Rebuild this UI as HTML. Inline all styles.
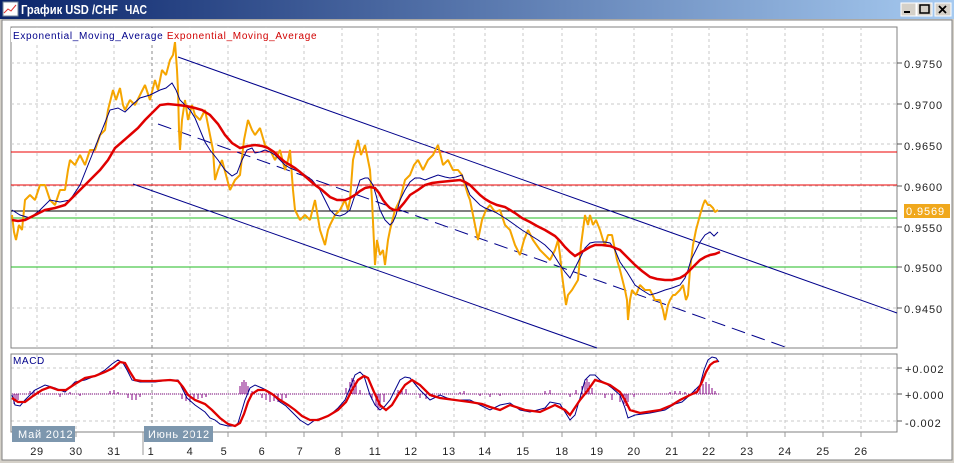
<!DOCTYPE html>
<html><head><meta charset="utf-8"><style>
body{margin:0;width:954px;height:463px;overflow:hidden;background:#d4d0c8;font-family:"Liberation Sans","DejaVu Sans",sans-serif}
</style></head><body>
<svg width="954" height="463" xmlns="http://www.w3.org/2000/svg" style="position:absolute;left:0;top:0">
<defs><linearGradient id="tb" x1="0" x2="1"><stop offset="0" stop-color="#0a246a"/><stop offset="1" stop-color="#a6caf0"/></linearGradient></defs>
<rect x="0" y="0" width="954" height="463" fill="#d4d0c8"/>
<rect x="0" y="0" width="954" height="19" fill="url(#tb)"/>
<rect x="3" y="2" width="15" height="14" fill="#fff" stroke="#789"/>
<polyline points="4,13 8,9 11,11 16,5" stroke="#d33" fill="none"/>
<text x="21" y="14" fill="#fff" font-weight="bold" font-size="13" textLength="97" lengthAdjust="spacingAndGlyphs">График USD /CHF</text>
<text x="125" y="14" fill="#fff" font-weight="bold" font-size="13" textLength="22" lengthAdjust="spacingAndGlyphs">ЧАС</text>
<g fill="#d4d0c8" stroke="#fff"><rect x="901" y="3" width="15" height="13"/><rect x="917" y="3" width="15" height="13"/><rect x="935" y="3" width="16" height="13"/></g>
<rect x="904" y="11" width="6" height="2" fill="#000"/>
<rect x="920" y="5" width="9" height="8" fill="none" stroke="#000" stroke-width="1.5"/>
<path d="M939 6l7 7M946 6l-7 7" stroke="#000" stroke-width="1.8"/>
<rect x="2" y="20" width="950" height="440" fill="#fff" stroke="#808080"/>
<rect x="11" y="27" width="886" height="321" fill="#fff" stroke="#808080"/>
<g stroke="#c8c8c8" stroke-dasharray="3,3">
<path d="M11 63H897M11 104H897M11 144H897M11 186H897M11 227H897M11 267H897M11 308H897"/>
<path d="M37 27V348M76 27V348M114 27V348M190 27V348M228 27V348M266 27V348M304 27V348M342 27V348M378 27V348M416 27V348M454 27V348M485 27V348M523 27V348M562 27V348M596 27V348M634 27V348M672 27V348M709 27V348M747 27V348M785 27V348M823 27V348M861 27V348"/>
<path d="M37 354V432M76 354V432M114 354V432M190 354V432M228 354V432M266 354V432M304 354V432M342 354V432M378 354V432M416 354V432M454 354V432M485 354V432M523 354V432M562 354V432M596 354V432M634 354V432M672 354V432M709 354V432M747 354V432M785 354V432M823 354V432M861 354V432"/>
<path d="M11 368H897M11 394H897M11 421H897"/>
</g>
<path d="M152 27V348M152 354V432" stroke="#888" stroke-dasharray="3,3"/>
<path d="M11 152H897M11 185H897" stroke="#e00" stroke-width="1"/>
<path d="M11 218H897M11 267H897" stroke="#2b2" stroke-width="1"/>
<path d="M11 211H897" stroke="#000"/>
<g stroke="#00008b" fill="none">
<line x1="178" y1="57" x2="897" y2="313"/>
<line x1="158" y1="124" x2="785" y2="347" stroke-dasharray="14,7"/>
<line x1="133" y1="184" x2="597" y2="348"/>
</g>
<polyline fill="none" stroke="#f5a500" stroke-width="2" stroke-linejoin="bevel" points="12,215 14,232 16,240 19,225 22,230 25,200 30,195 35,200 40,185 45,185 50,200 55,205 60,190 65,190 68,170 70,160 75,165 80,155 85,165 90,150 95,150 100,135 105,130 108,110 113,90 116,100 120,88 123,105 125,110 130,100 135,105 140,95 145,85 150,100 155,80 158,90 162,70 166,75 170,60 173,55 175,42 177,70 178,90 179,130 180,150 182,120 185,100 188,120 192,105 195,115 200,120 205,110 210,135 213,150 215,180 218,170 222,160 226,175 230,190 235,180 240,175 244,140 248,120 252,130 255,135 260,128 265,145 270,150 275,160 280,150 285,170 288,160 290,150 293,190 295,210 300,220 305,215 310,220 315,200 320,230 325,245 328,230 330,225 335,215 340,210 345,200 348,210 350,200 353,160 358,140 361,155 365,145 368,160 370,170 372,200 375,265 377,240 380,255 383,250 385,265 388,240 390,230 395,210 400,200 405,180 410,175 414,165 418,160 423,170 428,160 433,155 438,145 443,165 448,160 453,170 458,170 462,175 465,185 468,195 470,200 474,220 478,240 482,220 486,210 490,205 495,212 500,210 505,225 510,230 515,245 520,255 524,240 528,230 533,240 540,250 545,255 550,260 555,250 558,240 560,255 562,275 564,290 566,305 568,295 572,290 575,285 578,280 581,245 585,215 588,225 590,215 593,225 596,220 600,230 603,240 605,245 608,235 612,235 615,250 617,260 620,270 625,290 627,300 628,320 630,300 632,290 636,295 640,285 645,290 650,290 655,300 660,300 663,310 665,320 668,305 670,300 673,295 675,295 680,290 683,285 686,300 688,295 690,270 693,245 696,230 700,215 703,205 705,200 708,205 710,205 713,208 715,212 718,210"/>
<polyline fill="none" stroke="#00008b" stroke-width="1" points="12,210 20,215 30,218 40,210 50,200 60,202 70,200 80,185 90,160 100,135 110,110 118,108 125,112 132,105 140,98 150,95 160,90 166,88 172,83 176,90 180,100 185,105 190,110 195,118 200,130 205,142 210,150 218,160 225,170 232,176 237,173 242,160 247,150 252,148 255,153 260,152 265,150 270,152 275,155 280,160 285,165 290,168 295,170 300,172 305,175 312,180 320,190 325,200 330,210 335,215 340,216 345,214 350,210 355,195 360,180 365,178 368,178 371,182 373,185 376,195 380,210 385,220 390,225 393,222 396,215 400,200 405,190 410,182 415,178 420,178 425,180 430,178 438,175 445,177 450,178 456,177 462,175 466,185 470,195 475,200 480,205 485,208 490,210 495,212 500,215 508,220 515,225 522,230 530,235 538,240 545,245 552,252 560,265 565,272 570,278 575,268 580,258 585,248 590,243 595,242 600,242 605,242 610,243 615,250 620,262 627,272 635,285 642,290 650,295 657,293 665,290 672,288 680,285 685,278 688,270 691,260 695,252 700,242 705,235 710,232 714,236 718,232"/>
<polyline fill="none" stroke="#e00000" stroke-width="2.5" points="12,220 18,221 25,220 35,215 45,210 55,208 65,205 72,198 80,190 90,180 100,170 108,160 115,148 122,142 130,135 138,128 145,120 152,113 160,105 168,104 178,105 186,106 195,108 202,110 210,115 218,124 225,135 232,143 240,148 248,146 255,145 262,146 268,148 274,152 280,158 285,162 290,165 295,168 300,172 307,178 315,185 322,190 330,197 337,200 345,200 350,198 355,195 360,191 365,188 370,187 375,188 379,193 383,200 387,205 390,208 394,210 398,210 404,203 410,195 418,190 425,185 432,183 440,182 450,181 460,180 465,182 470,185 475,190 480,195 485,199 490,202 497,205 505,207 510,210 515,213 522,218 530,222 537,226 545,230 550,233 555,236 560,241 565,247 570,252 575,256 580,253 585,250 590,247 595,245 602,245 610,246 615,248 620,250 627,257 635,265 642,271 650,277 657,279 665,280 672,280 680,278 685,275 690,270 695,265 700,260 705,257 710,255 715,254 720,252"/>
<rect x="11" y="28" width="306" height="14" fill="#fff"/>
<text x="13" y="39" font-size="10" fill="#00008b" letter-spacing="0.68">Exponential_Moving_Average <tspan fill="#d00000">Exponential_Moving_Average</tspan></text>
<g font-size="11" fill="#222" letter-spacing="0.9">
<text x="904" y="68">0.9750</text><text x="904" y="109">0.9700</text><text x="904" y="150">0.9650</text><text x="904" y="191">0.9600</text><text x="904" y="232">0.9550</text><text x="904" y="272">0.9500</text><text x="904" y="313">0.9450</text>
<text x="905" y="373">+0.002</text><text x="905" y="399">+0.000</text><text x="905" y="427">-0.002</text>
</g>
<path d="M897 63h5M897 104h5M897 144h5M897 186h5M897 227h5M897 267h5M897 308h5M897 368h5M897 394h5M897 421h5" stroke="#555"/>
<rect x="904" y="204" width="46" height="14" fill="#f0a81c"/>
<text x="906" y="215" font-size="11" fill="#fff" letter-spacing="0.9">0.9569</text>
<rect x="11" y="354" width="886" height="78" fill="none" stroke="#808080"/>
<text x="13" y="364" font-size="10" fill="#00008b" letter-spacing="0.6">MACD</text>
<path d="M12 394H720" stroke="#800080" stroke-dasharray="1,1"/>
<path stroke="#800080" stroke-width="1" d="M14 394v10M16 394v8M18 394v6M30 394v-3M34 394v-4M38 394v-3M60 394v3M70 394v-2M80 394v2M110 394v-3M114 394v-4M118 394v-2M128 394v4M132 394v6M136 394v6M140 394v3M182 394v5M186 394v7M190 394v8M194 394v6M198 394v5M202 394v4M206 394v3M240 394v-8M242 394v-12M244 394v-14M246 394v-12M248 394v-8M252 394v-3M262 394v4M266 394v6M270 394v8M274 394v7M278 394v8M282 394v6M286 394v4M346 394v-6M350 394v-12M352 394v-16M354 394v-14M356 394v-10M360 394v-4M372 394v6M376 394v12M378 394v16M380 394v14M384 394v8M398 394v-4M402 394v-6M406 394v-5M420 394v4M426 394v5M432 394v3M460 394v-2M464 394v-3M480 394v2M490 394v3M500 394v2M545 394v-3M550 394v-4M570 394v3M576 394v-4M582 394v-8M585 394v-12M587 394v-15M589 394v-12M592 394v-6M605 394v4M612 394v6M620 394v8M624 394v10M626 394v12M628 394v8M634 394v3M670 394v-2M675 394v-3M680 394v-3M685 394v-2M695 394v-5M700 394v-8M703 394v-10M706 394v-12M709 394v-10M712 394v-6M715 394v-3"/>
<polyline fill="none" stroke="#00008b" stroke-width="1" points="12,395 15,405 20,406 25,400 35,390 45,385 55,388 65,392 75,382 85,380 95,376 105,370 112,364 118,360 123,363 127,370 132,380 140,382 155,382 170,380 178,380 182,388 187,398 195,405 205,412 210,418 215,420 220,424 228,426 235,426 238,423 242,410 245,400 250,388 255,385 262,388 270,392 276,398 280,402 286,406 292,412 300,420 308,425 315,420 322,418 330,415 338,408 345,400 350,388 355,375 360,372 364,376 370,395 375,405 380,410 385,406 390,400 395,390 400,380 405,377 410,378 415,384 420,390 425,395 430,400 440,395 447,398 455,400 470,400 480,405 490,410 500,405 510,403 520,410 530,412 545,408 550,402 560,404 570,420 575,415 580,398 585,380 590,375 595,375 600,380 605,383 612,388 620,395 625,408 628,418 635,415 650,413 665,410 675,404 682,402 690,395 695,390 700,385 704,370 708,360 712,357 716,358 719,362"/>
<polyline fill="none" stroke="#e00000" stroke-width="2.3" points="12,398 18,402 25,402 33,396 42,390 50,387 58,390 66,390 75,384 85,378 95,376 105,372 113,368 120,362 125,363 130,372 135,380 142,381 155,381 170,380 178,381 183,387 188,395 195,400 205,404 212,410 220,418 228,424 235,426 240,423 244,414 248,402 252,394 258,390 265,390 272,394 280,400 288,405 295,410 302,416 310,420 318,420 328,416 338,410 346,402 352,390 358,380 364,376 368,378 374,392 380,405 386,410 392,405 398,395 405,385 412,380 420,385 430,395 440,398 455,400 470,402 482,404 490,407 500,410 510,405 525,410 540,412 555,405 565,410 570,415 580,400 588,390 595,380 602,382 610,385 620,392 625,400 630,410 640,413 660,410 672,405 680,400 690,395 697,392 702,382 706,372 710,365 714,362 718,361"/>
<rect x="12" y="426" width="63" height="16" fill="#7d97ae"/>
<text x="18" y="438" font-size="11" fill="#fff" letter-spacing="0.8">Май 2012</text>
<rect x="144" y="426" width="69" height="16" fill="#7d97ae"/>
<text x="148" y="438" font-size="11" fill="#fff" letter-spacing="0.7">Июнь 2012</text>
<path d="M143 432V455M76 432v5M114 432v5M190 432v5M228 432v5M266 432v5M304 432v5M342 432v5M378 432v5M416 432v5M454 432v5M485 432v5M523 432v5M562 432v5M596 432v5M634 432v5M672 432v5M709 432v5M747 432v5M785 432v5M823 432v5M861 432v5" stroke="#999"/>
<g font-size="11" fill="#222" text-anchor="middle" letter-spacing="0.6">
<text x="37" y="455">29</text><text x="76" y="455">30</text><text x="114" y="455">31</text><text x="151" y="455">1</text><text x="190" y="455">4</text><text x="224" y="455">5</text><text x="262" y="455">6</text><text x="300" y="455">7</text><text x="338" y="455">8</text><text x="375" y="455">11</text><text x="411" y="455">12</text><text x="449" y="455">13</text><text x="485" y="455">14</text><text x="523" y="455">15</text><text x="562" y="455">18</text><text x="597" y="455">19</text><text x="634" y="455">20</text><text x="672" y="455">21</text><text x="709" y="455">22</text><text x="747" y="455">23</text><text x="785" y="455">24</text><text x="823" y="455">25</text><text x="861" y="455">26</text>
</g>
</svg>
</body></html>
